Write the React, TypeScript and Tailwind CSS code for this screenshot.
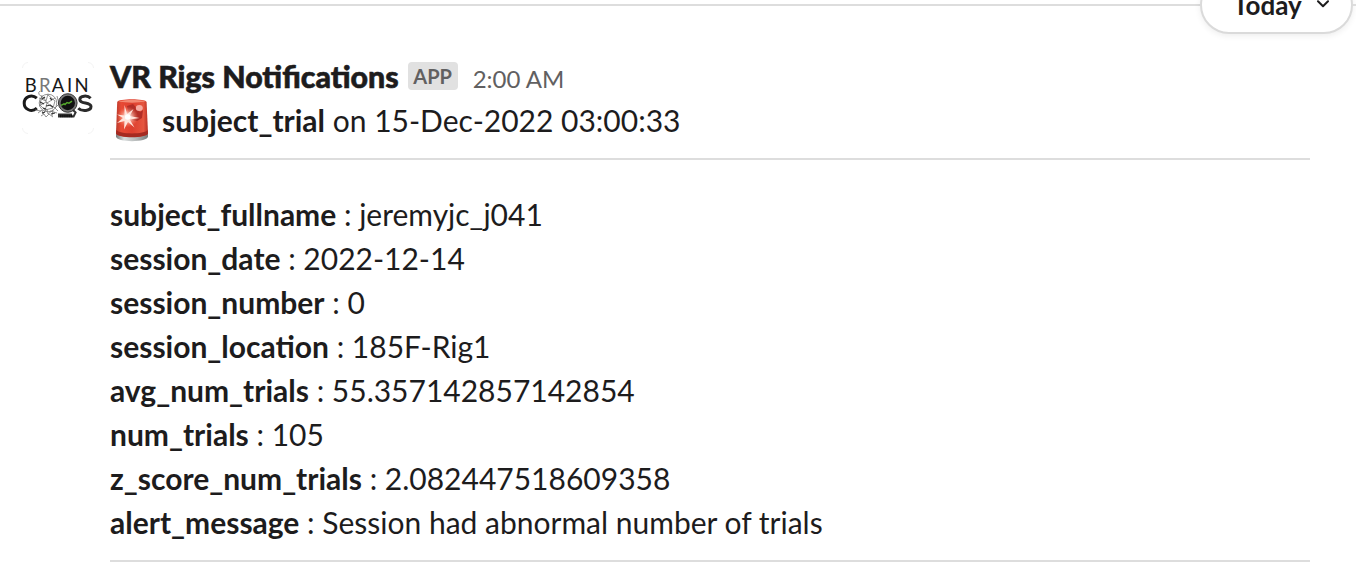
const fields = [
  { name: "subject_fullname", value: "jeremyjc_j041" },
  { name: "session_date", value: "2022-12-14" },
  { name: "session_number", value: "0" },
  { name: "session_location", value: "185F-Rig1" },
  { name: "avg_num_trials", value: "55.357142857142854" },
  { name: "num_trials", value: "105" },
  { name: "z_score_num_trials", value: "2.082447518609358" },
  { name: "alert_message", value: "Session had abnormal number of trials" },
];

function DateDivider() {
  return (
    <div className="-mt-6 flex h-[58px] shrink-0 items-center">
      <div className="h-0.5 flex-1 bg-[#dddddd]" />
      <button className="flex h-[58px] w-[153px] items-center justify-between rounded-full border-2 border-[#dadada] bg-white pr-[21px] pl-[31px] shadow-[0_2px_6px_rgba(0,0,0,0.07)]">
        <span className="-mt-px text-[26px] leading-none font-bold">Today</span>
        <svg className="-mt-0.5" width="14" height="10" viewBox="0 0 14 10" fill="none" stroke="#1d1c1d" strokeWidth="2" strokeLinecap="round" strokeLinejoin="round">
          <path d="M2 2.2 7 7.2 12 2.2" />
        </svg>
      </button>
      <div className="h-0.5 w-[3px] bg-[#dddddd]" />
    </div>
  );
}

function Logo() {
  return (
    <svg className="h-[72px] w-[72px] shrink-0" viewBox="0 0 72 72" fill="none">
      <path d="M.5 6Q1 1 6 .5M66 .5q5 .5 5.5 5.5M71.5 66q-.5 5-5.5 5.5M6 71.5q-5-.5-5.5-5.5" stroke="#f3f3f3" />
      {/* BRAIN */}
      <g fontFamily="Lato, sans-serif" fontSize="18.5" fill="#171717">
        <text x="2.7" y="29.5">B</text>
        <text x="17" y="29.5" fill="#777777">R</text>
        <text x="29.7" y="29.5">A</text>
        <text x="45" y="29.5">I</text>
        <text x="52.5" y="29.5">N</text>
      </g>
      {/* COGS */}
      <path d="M14.8 36.2C9.5 31.5 2.2 35.2 2.2 41.2S9.5 51 14.8 46.2" stroke="#1a1a1a" strokeWidth="3" />
      <path d="M68.6 36.2c-3-3.2-10.8-2.6-10.8 1.2 0 5 11.2 2.3 11.2 7.2 0 4.5-9.2 5.2-12.7 1.6" stroke="#2a2a2a" strokeWidth="3" />
      {/* brain network */}
      <g stroke="#777777" strokeWidth=".8">
        <circle cx="26" cy="41" r="8.8" />
        <path d="M18 29q-4 3 4 7l3 5 8-5M17 36l7 3 2-7M17 44l7-4 7 6M25 41l-2 8M20 33l-2 10 5 5 8-2 2-7-7-6" />
        <path d="M16 51l4-3 1 4 4-5 1 5 5-4-1 6M19 54l3-2 2 3 3-3 4 3M13 48l6 1M28 49l7 2M32 45l4 4M35 34l2 8-4 4" />
      </g>
      <path d="M20 37l3-2M28 43l3 2M21 46l3 1M28 36l2 2M20 51l3-1M29 52l4-1M18 40l4 2M24 44l5-1" stroke="#333333" strokeWidth="1.2" />
      {/* scope */}
      <circle cx="45.8" cy="41" r="8.2" fill="#111111" stroke="#777777" strokeWidth="2" />
      <circle cx="45.8" cy="41" r="9.3" stroke="#303030" />
      <path d="m39 43.4 3-1.5 1 .6 2-2 2 .7 3-2" stroke="#55a82c" strokeWidth="1.4" />
      <path d="m51 48 2.6 2.5-2 4H37v-2h13" stroke="#333333" strokeWidth="2" />
      <path d="M38 54h13" stroke="#111111" strokeWidth="2.5" strokeDasharray="1.5 .6" />
    </svg>
  );
}

function Siren() {
  return (
    <svg className="ml-1 h-11 w-9 shrink-0" viewBox="0 0 36 44">
      <defs>
        <linearGradient id="dome" x1="0" x2="1">
          <stop stopColor="#b93b2d" />
          <stop offset=".16" stopColor="#e84a35" />
          <stop offset=".5" stopColor="#dd3f2f" />
          <stop offset=".86" stopColor="#e5553f" />
          <stop offset="1" stopColor="#b73126" />
        </linearGradient>
        <linearGradient id="base" x1="0" x2="1">
          <stop stopColor="#777b7b" />
          <stop offset=".25" stopColor="#d8dcdc" />
          <stop offset=".6" stopColor="#b9bdbd" />
          <stop offset="1" stopColor="#777b7b" />
        </linearGradient>
        <radialGradient id="glow">
          <stop stopColor="#ffffff" />
          <stop offset=".35" stopColor="#ffd8ce" stopOpacity=".8" />
          <stop offset="1" stopColor="#ff8060" stopOpacity="0" />
        </radialGradient>
      </defs>
      <path d="M2 34h32v4.5c0 6.2-32 6.2-32 0Z" fill="url(#base)" />
      <path d="M3.2 4C3.5.2 32.2.2 32.6 4L34 35c-1 5.3-31 5.3-32 0Z" fill="url(#dome)" />
      <path d="M2.3 32c3 4.5 28.5 4.5 31.5 0l.2 3.5c-2 5-30 5-32 0Z" fill="#a52a21" />
      <path d="M4 3.6Q18 0 32 3.6 18 5.8 4 3.6Z" fill="#f38a74" />
      <path d="m13 8 6-2 7 8 3-2-1 8-5 3-7-1Z" fill="#b22e27" />
      <ellipse cx="25.3" cy="10" rx="3.5" ry="3" fill="#f6aaa0" />
      <circle cx="13.7" cy="19" r="10.5" fill="url(#glow)" />
      <path d="m10.5 7 2.7 9 6.3-5-3.8 7 9.8 2-9.8 1.5 4.8 8-6.5-5.5-4 7.5.5-8.5-7.5 2 6-5-6-3.5 7.5 1Z" fill="#ffe4dc" />
      <circle cx="13.7" cy="19" r="2.8" fill="#ffffff" />
    </svg>
  );
}

export default function App() {
  return (
    <div className="flex h-[580px] w-full flex-col overflow-hidden bg-white font-['Lato',sans-serif] text-[#1d1c1d]">
      <DateDivider />
      <article className="flex gap-4 pt-7 pr-[46px] pl-[22px]">
        <Logo />
        <div className="min-w-0 flex-1">
          <header className="-mt-1 flex h-10 items-start">
            <span className="text-[30.3px] leading-9 font-black [-webkit-text-stroke:0.6px_#1d1c1d]">VR Rigs Notifications</span>
            <span className="mt-1 ml-[9px] flex h-7 w-[50px] items-center justify-center rounded bg-[#e1e1e1] text-[20px] leading-none font-bold text-[#616061]">APP</span>
            <time className="mt-[5px] ml-[15px] text-[24px] leading-8 text-[#616061]">2:00 AM</time>
          </header>
          <div className="flex h-11 items-center text-[30px] leading-[44px]">
            <Siren />
            <p className="ml-3 whitespace-nowrap">
              <b className="font-bold">subject_trial</b> on 15-Dec-2022 03:00:33
            </p>
          </div>
          <div className="mt-4 h-0.5 bg-[#dddddd]" />
          <div className="mt-8 text-[30px] leading-[44px]">
            {fields.map((field) => (
              <p key={field.name} className="whitespace-nowrap">
                <b className="font-bold">{field.name}</b> : {field.value}
              </p>
            ))}
          </div>
          <div className="mt-4 h-0.5 bg-[#dddddd]" />
        </div>
      </article>
    </div>
  );
}
